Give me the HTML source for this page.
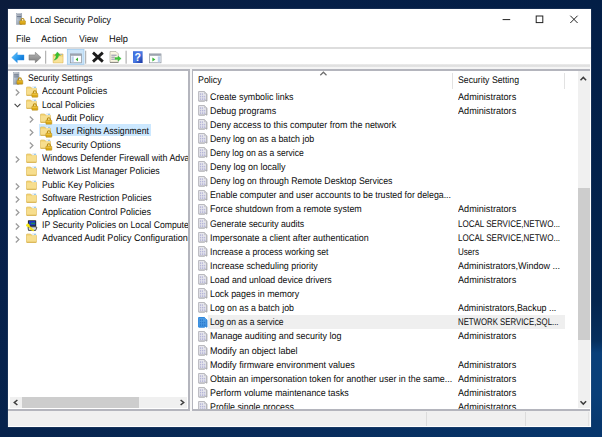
<!DOCTYPE html>
<html><head><meta charset="utf-8"><title>Local Security Policy</title>
<style>
html,body{margin:0;padding:0}
body{width:602px;height:437px;overflow:hidden;position:relative;font-family:"Liberation Sans", sans-serif;font-size:9.7px;color:#0c0c0c;
 background:#06224a;}
.bg{position:absolute;left:0;top:0;width:602px;height:437px;
 background:linear-gradient(90deg,#0b1c3c 0px,#061f47 300px,#031e46 602px);}
.bgl{position:absolute;left:0;top:0;width:9px;height:437px;background:linear-gradient(180deg,#0b1c3c 0px,#08204a 200px,#06234d 437px)}
.bgr{position:absolute;left:585px;top:0;width:17px;height:437px;background:linear-gradient(180deg,#031e46 0px,#04254f 300px,#062f5e 341px,#0a407a 353px,#0a3f78 395px,#07366c 437px)}
.bgb{position:absolute;left:0;top:420px;width:602px;height:17px;background:linear-gradient(90deg,#07234c 0px,#082c5b 300px,#07356a 560px,#07366c 602px)}
.a{position:absolute;display:block}
.t{position:absolute;white-space:pre;text-rendering:geometricPrecision;line-height:12px;height:12px;transform-origin:0 0;display:block}
.win{position:absolute;left:8.3px;top:9px;width:582.7px;height:418.1px;background:#fff;box-shadow:0 0 0 .4px rgba(90,105,130,.5)}
.pane{position:absolute;background:#fff;overflow:hidden}
</style></head><body>
<div class="bg"></div><div class="bgl"></div><div class="bgr"></div><div class="bgb"></div>
<div class="win"></div>

<!-- title bar -->
<svg class="a" style="left:15.8px;top:13.2px" width="10.6" height="12.2" viewBox="0 0 11 13" preserveAspectRatio="none"><defs><linearGradient id="sv2" x1="0" y1="0" x2="1" y2="1"><stop offset="0" stop-color="#e6ebf1"/><stop offset=".5" stop-color="#aab6c4"/><stop offset="1" stop-color="#6f7d8f"/></linearGradient>
<linearGradient id="lk2" x1="0" y1="0" x2="0" y2="1"><stop offset="0" stop-color="#ecbe2c"/><stop offset="1" stop-color="#cc960c"/></linearGradient></defs>
<rect x=".4" y=".4" width="5.6" height="11.8" fill="url(#sv2)" stroke="#8d99a8" stroke-width=".5"/>
<rect x=".9" y=".9" width="4.6" height=".7" fill="#fff"/><rect x=".9" y="1.7" width="4.6" height="1" fill="#3c4a62"/><rect x=".9" y="2.8" width="4.6" height=".6" fill="#fff"/>
<rect x=".9" y="3.5" width="4.6" height=".9" fill="#4d5b72"/>
<rect x="1.1" y="5.0" width="4.2" height=".7" fill="#8d98a8"/>
<path d="M5.4 8.6 V7.3 a1.45 1.45 0 0 1 2.9 0 V8.6" fill="none" stroke="#b88c10" stroke-width="1.1"/>
<rect x="3.9" y="8.3" width="5.9" height="3.9" rx=".4" fill="url(#lk2)" stroke="#a87d0c" stroke-width=".45"/></svg>
<svg class="a" style="left:500px;top:12px" width="82" height="14" viewBox="0 0 82 14">
 <path d="M2.6 7.6 H10.2" stroke="#222" stroke-width="1" fill="none"/>
 <rect x="36.2" y="4" width="6.6" height="6.6" fill="none" stroke="#222" stroke-width="1"/>
 <path d="M70.3 3.7 L77.6 11 M77.6 3.7 L70.3 11" stroke="#222" stroke-width="1" fill="none"/>
</svg>
<span class="t" style="left:30.0px;top:14.55px;transform:scaleX(0.9061)">Local Security Policy</span>
<span class="t" style="left:16.0px;top:33.55px;transform:scaleX(0.9280)">File</span>
<span class="t" style="left:41.0px;top:33.55px;transform:scaleX(0.9652)">Action</span>
<span class="t" style="left:79.0px;top:33.55px;transform:scaleX(0.9122)">View</span>
<span class="t" style="left:109.0px;top:33.55px;transform:scaleX(0.9530)">Help</span>

<!-- menu / toolbar lines -->
<div class="a" style="left:8px;top:47.1px;width:583px;height:1.7px;background:#dddddd"></div>
<div class="a" style="left:8px;top:64px;width:583px;height:2.5px;background:linear-gradient(#ededed,#dedede 60%,#e6e6e6)"></div>
<div class="a" style="left:8px;top:66.5px;width:583px;height:3px;background:#f5f5f5"></div>

<svg class="a" style="left:8px;top:48px" width="160" height="17" viewBox="0 0 160 17">
<defs>
<linearGradient id="ba" x1="0" y1="0" x2="1" y2=".6"><stop offset="0" stop-color="#6fcafb"/><stop offset=".55" stop-color="#2b9bee"/><stop offset="1" stop-color="#0b74d6"/></linearGradient>
<linearGradient id="fa" x1="0" y1="0" x2="0" y2="1"><stop offset="0" stop-color="#b5b5b5"/><stop offset="1" stop-color="#7d7d7d"/></linearGradient>
<linearGradient id="hp" x1="0" y1="0" x2="1" y2="1"><stop offset="0" stop-color="#3d6ddc"/><stop offset=".5" stop-color="#4a7ae4"/><stop offset="1" stop-color="#15339e"/></linearGradient>
</defs>
<!-- back -->
<path d="M3.7 9.5 L9.3 4.3 V6.9 H16 V12.1 H9.3 V14.7 Z" fill="url(#ba)" stroke="#3b97e6" stroke-width=".4"/>
<!-- forward -->
<path d="M33 9.5 L27.3 4.3 V6.9 H21 V12.1 H27.3 V14.7 Z" fill="url(#fa)" stroke="#6e6e6e" stroke-width=".5"/>
<!-- sep -->
<rect x="37.2" y="2.7" width="1" height="13" fill="#a4a4a4"/>
<!-- up folder -->
<path d="M45.2 6.4 H48.6 L49.5 6 H55 V14.8 H45.2 Z" fill="#f3d678" stroke="#d6ab45" stroke-width=".6"/>
<path d="M45.6 8.6 H54.6 V14.4 H45.6 Z" fill="#f8e39b"/>
<rect x="52.2" y="6" width="2" height=".8" fill="#8ab4e0"/>
<path d="M49.4 3.9 L52.4 7.5 L50.7 7.2 C50.5 9.7 48.9 11.6 46 12.2 C47.5 10.7 48.2 9.1 48.2 7.3 L46.6 7.7 Z" fill="#35c230" stroke="#27a027" stroke-width=".3"/>
<!-- show/hide tree (active) -->
<rect x="59.3" y="1.3" width="16.7" height="15" fill="#cce4f7" stroke="#98c8ee" stroke-width=".7"/>
<rect x="62.6" y="5.9" width="11" height="8.9" fill="#fdfdfe" stroke="#858d98" stroke-width=".7"/>
<rect x="62.9" y="6.2" width="10.4" height="1.5" fill="#8c95a2"/>
<rect x="63.5" y="8.4" width="2.3" height="5.8" fill="#bcd2ee"/>
<path d="M70 9.6 V13.2 L67.6 11.4 Z" fill="#34b233"/>
<!-- sep -->
<rect x="77.2" y="2.7" width="1" height="13" fill="#a4a4a4"/>
<!-- delete X -->
<path d="M85 4.6 L94.8 13.6 M94.8 4.6 L85 13.6" stroke="#1c1c1c" stroke-width="2.8" fill="none"/>
<!-- export -->
<path d="M102 3.5 H108 L110.3 5.8 V14.4 H102 Z" fill="#faf6e2" stroke="#a3a194" stroke-width=".6"/>
<path d="M102 14.4 H110.3" stroke="#6b6b66" stroke-width=".7"/>
<path d="M103.3 7.2 H108.6 M103.3 9.2 H106.8 M103.3 11.2 H106.8" stroke="#74759a" stroke-width=".8"/>
<path d="M107 9.6 H110 V8 L113.2 10.6 L110 13.2 V11.6 H107 Z" fill="#3ec83c" stroke="#2aa82e" stroke-width=".3"/>
<!-- sep -->
<rect x="117.6" y="2.7" width="1" height="13" fill="#a4a4a4"/>
<!-- help -->
<rect x="125" y="3.2" width="9.6" height="11.8" fill="url(#hp)"/>
<text x="129.8" y="12.9" font-family="Liberation Sans, sans-serif" font-weight="bold" font-size="10.5" fill="#fff" text-anchor="middle">?</text>
<!-- last -->
<rect x="141.6" y="5.9" width="11.4" height="8.9" fill="#fdfdfe" stroke="#858d98" stroke-width=".7"/>
<rect x="141.9" y="6.2" width="10.8" height="1.5" fill="#8c95a2"/>
<rect x="149.8" y="8.4" width="2.4" height="5.8" fill="#bcd2ee"/>
<path d="M144.4 9.4 V13.4 L147.4 11.4 Z" fill="#36b834"/>
</svg>

<!-- panes -->
<div class="a" style="left:8.3px;top:69.3px;width:581.4px;height:341.4px;background:#f6f6f6"></div>
<!-- tree pane -->
<div class="pane" style="left:8.3px;top:69.4px;width:181.4px;height:341.2px;background:#b4b5bd">
 <div class="a" style="left:0;top:1.4px;width:180.1px;height:338.5px;background:#fff"></div>
 <div class="a" style="left:30.7px;top:54.7px;width:112.3px;height:12.2px;background:#cce8ff"></div>
</div>
<div class="a" style="left:0;top:0;width:188.4px;height:409px;overflow:hidden">
<svg class="a" style="left:13.0px;top:71.7px" width="11" height="13" viewBox="0 0 11 13" preserveAspectRatio="none"><defs><linearGradient id="sv" x1="0" y1="0" x2="1" y2="1"><stop offset="0" stop-color="#e6ebf1"/><stop offset=".5" stop-color="#aab6c4"/><stop offset="1" stop-color="#6f7d8f"/></linearGradient>
<linearGradient id="lk" x1="0" y1="0" x2="0" y2="1"><stop offset="0" stop-color="#ecbe2c"/><stop offset="1" stop-color="#cc960c"/></linearGradient></defs>
<rect x=".4" y=".4" width="5.6" height="11.8" fill="url(#sv)" stroke="#8d99a8" stroke-width=".5"/>
<rect x=".9" y=".9" width="4.6" height=".7" fill="#fff"/><rect x=".9" y="1.7" width="4.6" height="1" fill="#3c4a62"/><rect x=".9" y="2.8" width="4.6" height=".6" fill="#fff"/>
<rect x=".9" y="3.5" width="4.6" height=".9" fill="#4d5b72"/>
<rect x="1.1" y="5.0" width="4.2" height=".7" fill="#8d98a8"/>
<path d="M5.4 8.6 V7.3 a1.45 1.45 0 0 1 2.9 0 V8.6" fill="none" stroke="#b88c10" stroke-width="1.1"/>
<rect x="3.9" y="8.3" width="5.9" height="3.9" rx=".4" fill="url(#lk)" stroke="#a87d0c" stroke-width=".45"/></svg>
<svg class="a" style="left:26.0px;top:85.9px" width="13" height="12" viewBox="0 0 13 12" preserveAspectRatio="none"><path d="M.5 1.6 Q.5 1 1.1 1 H4.6 L5.6 2.1 H9.9 Q10.4 2.1 10.4 2.7 V9 Q10.4 9.5 9.9 9.5 H1 Q.5 9.5 .5 9 Z" fill="#f4d67a" stroke="#d9b24c" stroke-width=".6"/>
<path d="M5.8 1.9 L6.6 .6 H10 V2.4 H6.2 Z" fill="#eef4fa" stroke="#c9d3dd" stroke-width=".3"/>
<rect x="8.2" y=".9" width="1.5" height=".9" fill="#69b4e8"/>
<path d="M.8 3.0 H5.6 L6.5 2.3 H10.1 V9 H.8 Z" fill="#f7de8e"/>
<path d="M.8 9.2 H10.2" stroke="#d3a93f" stroke-width=".7"/><path d="M7.4 7.6 V6.2 a1.45 1.45 0 0 1 2.9 0 V7.6" fill="none" stroke="#b88c10" stroke-width="1.1"/>
<rect x="5.9" y="7.3" width="5.9" height="3.9" rx=".4" fill="#dcaa1a" stroke="#a87d0c" stroke-width=".45"/>
<rect x="6.2" y="7.6" width="5.3" height="1.3" fill="#f2cb45" opacity=".8"/></svg>
<svg class="a" style="left:15.4px;top:88.9px" width="5" height="7" viewBox="0 0 5 7"><path d="M0.8 0.5 L3.9 3.5 L0.8 6.5" fill="none" stroke="#9b9b9b" stroke-width="1.25"/></svg>
<svg class="a" style="left:26.0px;top:99.2px" width="13" height="12" viewBox="0 0 13 12" preserveAspectRatio="none"><path d="M.5 1.6 Q.5 1 1.1 1 H4.6 L5.6 2.1 H9.9 Q10.4 2.1 10.4 2.7 V9 Q10.4 9.5 9.9 9.5 H1 Q.5 9.5 .5 9 Z" fill="#f4d67a" stroke="#d9b24c" stroke-width=".6"/>
<path d="M5.8 1.9 L6.6 .6 H10 V2.4 H6.2 Z" fill="#eef4fa" stroke="#c9d3dd" stroke-width=".3"/>
<rect x="8.2" y=".9" width="1.5" height=".9" fill="#69b4e8"/>
<path d="M.8 3.0 H5.6 L6.5 2.3 H10.1 V9 H.8 Z" fill="#f7de8e"/>
<path d="M.8 9.2 H10.2" stroke="#d3a93f" stroke-width=".7"/><path d="M7.4 7.6 V6.2 a1.45 1.45 0 0 1 2.9 0 V7.6" fill="none" stroke="#b88c10" stroke-width="1.1"/>
<rect x="5.9" y="7.3" width="5.9" height="3.9" rx=".4" fill="#dcaa1a" stroke="#a87d0c" stroke-width=".45"/>
<rect x="6.2" y="7.6" width="5.3" height="1.3" fill="#f2cb45" opacity=".8"/></svg>
<svg class="a" style="left:14.0px;top:102.5px" width="7" height="5" viewBox="0 0 7 5"><path d="M0.6 0.8 L3.5 3.8 L6.4 0.8" fill="none" stroke="#404040" stroke-width="1.1"/></svg>
<svg class="a" style="left:39.7px;top:112.6px" width="13" height="12" viewBox="0 0 13 12" preserveAspectRatio="none"><path d="M.5 1.6 Q.5 1 1.1 1 H4.6 L5.6 2.1 H9.9 Q10.4 2.1 10.4 2.7 V9 Q10.4 9.5 9.9 9.5 H1 Q.5 9.5 .5 9 Z" fill="#f4d67a" stroke="#d9b24c" stroke-width=".6"/>
<path d="M5.8 1.9 L6.6 .6 H10 V2.4 H6.2 Z" fill="#eef4fa" stroke="#c9d3dd" stroke-width=".3"/>
<rect x="8.2" y=".9" width="1.5" height=".9" fill="#69b4e8"/>
<path d="M.8 3.0 H5.6 L6.5 2.3 H10.1 V9 H.8 Z" fill="#f7de8e"/>
<path d="M.8 9.2 H10.2" stroke="#d3a93f" stroke-width=".7"/><path d="M7.4 7.6 V6.2 a1.45 1.45 0 0 1 2.9 0 V7.6" fill="none" stroke="#b88c10" stroke-width="1.1"/>
<rect x="5.9" y="7.3" width="5.9" height="3.9" rx=".4" fill="#dcaa1a" stroke="#a87d0c" stroke-width=".45"/>
<rect x="6.2" y="7.6" width="5.3" height="1.3" fill="#f2cb45" opacity=".8"/></svg>
<svg class="a" style="left:29.1px;top:115.6px" width="5" height="7" viewBox="0 0 5 7"><path d="M0.8 0.5 L3.9 3.5 L0.8 6.5" fill="none" stroke="#9b9b9b" stroke-width="1.25"/></svg>
<svg class="a" style="left:39.7px;top:126.0px" width="13" height="12" viewBox="0 0 13 12" preserveAspectRatio="none"><path d="M.5 1.6 Q.5 1 1.1 1 H4.6 L5.6 2.1 H9.9 Q10.4 2.1 10.4 2.7 V9 Q10.4 9.5 9.9 9.5 H1 Q.5 9.5 .5 9 Z" fill="#f4d67a" stroke="#d9b24c" stroke-width=".6"/>
<path d="M5.8 1.9 L6.6 .6 H10 V2.4 H6.2 Z" fill="#eef4fa" stroke="#c9d3dd" stroke-width=".3"/>
<rect x="8.2" y=".9" width="1.5" height=".9" fill="#69b4e8"/>
<path d="M.8 3.0 H5.6 L6.5 2.3 H10.1 V9 H.8 Z" fill="#f7de8e"/>
<path d="M.8 9.2 H10.2" stroke="#d3a93f" stroke-width=".7"/><path d="M7.4 7.6 V6.2 a1.45 1.45 0 0 1 2.9 0 V7.6" fill="none" stroke="#b88c10" stroke-width="1.1"/>
<rect x="5.9" y="7.3" width="5.9" height="3.9" rx=".4" fill="#dcaa1a" stroke="#a87d0c" stroke-width=".45"/>
<rect x="6.2" y="7.6" width="5.3" height="1.3" fill="#f2cb45" opacity=".8"/></svg>
<svg class="a" style="left:29.1px;top:129.0px" width="5" height="7" viewBox="0 0 5 7"><path d="M0.8 0.5 L3.9 3.5 L0.8 6.5" fill="none" stroke="#9b9b9b" stroke-width="1.25"/></svg>
<svg class="a" style="left:39.7px;top:139.3px" width="13" height="12" viewBox="0 0 13 12" preserveAspectRatio="none"><path d="M.5 1.6 Q.5 1 1.1 1 H4.6 L5.6 2.1 H9.9 Q10.4 2.1 10.4 2.7 V9 Q10.4 9.5 9.9 9.5 H1 Q.5 9.5 .5 9 Z" fill="#f4d67a" stroke="#d9b24c" stroke-width=".6"/>
<path d="M5.8 1.9 L6.6 .6 H10 V2.4 H6.2 Z" fill="#eef4fa" stroke="#c9d3dd" stroke-width=".3"/>
<rect x="8.2" y=".9" width="1.5" height=".9" fill="#69b4e8"/>
<path d="M.8 3.0 H5.6 L6.5 2.3 H10.1 V9 H.8 Z" fill="#f7de8e"/>
<path d="M.8 9.2 H10.2" stroke="#d3a93f" stroke-width=".7"/><path d="M7.4 7.6 V6.2 a1.45 1.45 0 0 1 2.9 0 V7.6" fill="none" stroke="#b88c10" stroke-width="1.1"/>
<rect x="5.9" y="7.3" width="5.9" height="3.9" rx=".4" fill="#dcaa1a" stroke="#a87d0c" stroke-width=".45"/>
<rect x="6.2" y="7.6" width="5.3" height="1.3" fill="#f2cb45" opacity=".8"/></svg>
<svg class="a" style="left:29.1px;top:142.3px" width="5" height="7" viewBox="0 0 5 7"><path d="M0.8 0.5 L3.9 3.5 L0.8 6.5" fill="none" stroke="#9b9b9b" stroke-width="1.25"/></svg>
<svg class="a" style="left:26.0px;top:152.7px" width="12" height="12" viewBox="0 0 12 12" preserveAspectRatio="none"><path d="M.5 1.6 Q.5 1 1.1 1 H4.6 L5.6 2.1 H9.9 Q10.4 2.1 10.4 2.7 V9 Q10.4 9.5 9.9 9.5 H1 Q.5 9.5 .5 9 Z" fill="#f4d67a" stroke="#d9b24c" stroke-width=".6"/>
<path d="M5.8 1.9 L6.6 .6 H10 V2.4 H6.2 Z" fill="#eef4fa" stroke="#c9d3dd" stroke-width=".3"/>
<rect x="8.2" y=".9" width="1.5" height=".9" fill="#69b4e8"/>
<path d="M.8 3.0 H5.6 L6.5 2.3 H10.1 V9 H.8 Z" fill="#f7de8e"/>
<path d="M.8 9.2 H10.2" stroke="#d3a93f" stroke-width=".7"/></svg>
<svg class="a" style="left:15.4px;top:155.7px" width="5" height="7" viewBox="0 0 5 7"><path d="M0.8 0.5 L3.9 3.5 L0.8 6.5" fill="none" stroke="#9b9b9b" stroke-width="1.25"/></svg>
<svg class="a" style="left:26.0px;top:166.1px" width="12" height="12" viewBox="0 0 12 12" preserveAspectRatio="none"><path d="M.5 1.6 Q.5 1 1.1 1 H4.6 L5.6 2.1 H9.9 Q10.4 2.1 10.4 2.7 V9 Q10.4 9.5 9.9 9.5 H1 Q.5 9.5 .5 9 Z" fill="#f4d67a" stroke="#d9b24c" stroke-width=".6"/>
<path d="M5.8 1.9 L6.6 .6 H10 V2.4 H6.2 Z" fill="#eef4fa" stroke="#c9d3dd" stroke-width=".3"/>
<rect x="8.2" y=".9" width="1.5" height=".9" fill="#69b4e8"/>
<path d="M.8 3.0 H5.6 L6.5 2.3 H10.1 V9 H.8 Z" fill="#f7de8e"/>
<path d="M.8 9.2 H10.2" stroke="#d3a93f" stroke-width=".7"/></svg>
<svg class="a" style="left:26.0px;top:179.5px" width="12" height="12" viewBox="0 0 12 12" preserveAspectRatio="none"><path d="M.5 1.6 Q.5 1 1.1 1 H4.6 L5.6 2.1 H9.9 Q10.4 2.1 10.4 2.7 V9 Q10.4 9.5 9.9 9.5 H1 Q.5 9.5 .5 9 Z" fill="#f4d67a" stroke="#d9b24c" stroke-width=".6"/>
<path d="M5.8 1.9 L6.6 .6 H10 V2.4 H6.2 Z" fill="#eef4fa" stroke="#c9d3dd" stroke-width=".3"/>
<rect x="8.2" y=".9" width="1.5" height=".9" fill="#69b4e8"/>
<path d="M.8 3.0 H5.6 L6.5 2.3 H10.1 V9 H.8 Z" fill="#f7de8e"/>
<path d="M.8 9.2 H10.2" stroke="#d3a93f" stroke-width=".7"/></svg>
<svg class="a" style="left:15.4px;top:182.5px" width="5" height="7" viewBox="0 0 5 7"><path d="M0.8 0.5 L3.9 3.5 L0.8 6.5" fill="none" stroke="#9b9b9b" stroke-width="1.25"/></svg>
<svg class="a" style="left:26.0px;top:192.8px" width="12" height="12" viewBox="0 0 12 12" preserveAspectRatio="none"><path d="M.5 1.6 Q.5 1 1.1 1 H4.6 L5.6 2.1 H9.9 Q10.4 2.1 10.4 2.7 V9 Q10.4 9.5 9.9 9.5 H1 Q.5 9.5 .5 9 Z" fill="#f4d67a" stroke="#d9b24c" stroke-width=".6"/>
<path d="M5.8 1.9 L6.6 .6 H10 V2.4 H6.2 Z" fill="#eef4fa" stroke="#c9d3dd" stroke-width=".3"/>
<rect x="8.2" y=".9" width="1.5" height=".9" fill="#69b4e8"/>
<path d="M.8 3.0 H5.6 L6.5 2.3 H10.1 V9 H.8 Z" fill="#f7de8e"/>
<path d="M.8 9.2 H10.2" stroke="#d3a93f" stroke-width=".7"/></svg>
<svg class="a" style="left:15.4px;top:195.8px" width="5" height="7" viewBox="0 0 5 7"><path d="M0.8 0.5 L3.9 3.5 L0.8 6.5" fill="none" stroke="#9b9b9b" stroke-width="1.25"/></svg>
<svg class="a" style="left:26.0px;top:206.2px" width="12" height="12" viewBox="0 0 12 12" preserveAspectRatio="none"><path d="M.5 1.6 Q.5 1 1.1 1 H4.6 L5.6 2.1 H9.9 Q10.4 2.1 10.4 2.7 V9 Q10.4 9.5 9.9 9.5 H1 Q.5 9.5 .5 9 Z" fill="#f4d67a" stroke="#d9b24c" stroke-width=".6"/>
<path d="M5.8 1.9 L6.6 .6 H10 V2.4 H6.2 Z" fill="#eef4fa" stroke="#c9d3dd" stroke-width=".3"/>
<rect x="8.2" y=".9" width="1.5" height=".9" fill="#69b4e8"/>
<path d="M.8 3.0 H5.6 L6.5 2.3 H10.1 V9 H.8 Z" fill="#f7de8e"/>
<path d="M.8 9.2 H10.2" stroke="#d3a93f" stroke-width=".7"/></svg>
<svg class="a" style="left:15.4px;top:209.2px" width="5" height="7" viewBox="0 0 5 7"><path d="M0.8 0.5 L3.9 3.5 L0.8 6.5" fill="none" stroke="#9b9b9b" stroke-width="1.25"/></svg>
<svg class="a" style="left:26.0px;top:219.6px" width="12" height="12" viewBox="0 0 12 12" preserveAspectRatio="none"><rect x="1.9" y=".2" width="8.3" height="6.5" rx=".6" fill="#23262c"/>
<rect x="2.9" y="1.1" width="6.3" height="4.3" fill="#1b36cc"/>
<rect x="4.9" y="2.7" width="4.2" height="1.5" fill="#1f8a5a"/>
<path d="M2 7.2 L3.3 6.8 H9.1 L10.9 7.2 L9.7 10.4 H2.5 Z" fill="#d5d9de" stroke="#26282c" stroke-width=".8"/>
<path d="M1.6 5.2 L7.2 10.4" stroke="#f2e20e" stroke-width="1.6" stroke-linecap="round"/>
<path d="M5.6 10.6 L6.9 9.2 M4.6 9.6 L5.6 8.5" stroke="#f2e20e" stroke-width=".8"/>
<circle cx="1.9" cy="5.2" r="1.7" fill="#f5e614"/></svg>
<svg class="a" style="left:15.4px;top:222.6px" width="5" height="7" viewBox="0 0 5 7"><path d="M0.8 0.5 L3.9 3.5 L0.8 6.5" fill="none" stroke="#9b9b9b" stroke-width="1.25"/></svg>
<svg class="a" style="left:26.0px;top:232.9px" width="12" height="12" viewBox="0 0 12 12" preserveAspectRatio="none"><path d="M.5 1.6 Q.5 1 1.1 1 H4.6 L5.6 2.1 H9.9 Q10.4 2.1 10.4 2.7 V9 Q10.4 9.5 9.9 9.5 H1 Q.5 9.5 .5 9 Z" fill="#f4d67a" stroke="#d9b24c" stroke-width=".6"/>
<path d="M5.8 1.9 L6.6 .6 H10 V2.4 H6.2 Z" fill="#eef4fa" stroke="#c9d3dd" stroke-width=".3"/>
<rect x="8.2" y=".9" width="1.5" height=".9" fill="#69b4e8"/>
<path d="M.8 3.0 H5.6 L6.5 2.3 H10.1 V9 H.8 Z" fill="#f7de8e"/>
<path d="M.8 9.2 H10.2" stroke="#d3a93f" stroke-width=".7"/></svg>
<svg class="a" style="left:15.4px;top:235.9px" width="5" height="7" viewBox="0 0 5 7"><path d="M0.8 0.5 L3.9 3.5 L0.8 6.5" fill="none" stroke="#9b9b9b" stroke-width="1.25"/></svg>
<span class="t" style="left:27.5px;top:72.55px;transform:scaleX(0.8885)">Security Settings</span>
<span class="t" style="left:42.0px;top:85.55px;transform:scaleX(0.9159)">Account Policies</span>
<span class="t" style="left:42.0px;top:99.55px;transform:scaleX(0.8863)">Local Policies</span>
<span class="t" style="left:55.8px;top:112.55px;transform:scaleX(0.9422)">Audit Policy</span>
<span class="t" style="left:55.8px;top:125.55px;transform:scaleX(0.8987)">User Rights Assignment</span>
<span class="t" style="left:55.8px;top:139.55px;transform:scaleX(0.9103)">Security Options</span>
<span class="t" style="left:42.0px;top:152.55px;transform:scaleX(0.9103)">Windows Defender Firewall with Advanced Security</span>
<span class="t" style="left:42.0px;top:165.55px;transform:scaleX(0.9033)">Network List Manager Policies</span>
<span class="t" style="left:42.0px;top:179.55px;transform:scaleX(0.8834)">Public Key Policies</span>
<span class="t" style="left:42.0px;top:192.55px;transform:scaleX(0.8928)">Software Restriction Policies</span>
<span class="t" style="left:42.0px;top:206.55px;transform:scaleX(0.9285)">Application Control Policies</span>
<span class="t" style="left:42.0px;top:219.55px;transform:scaleX(0.8949)">IP Security Policies on Local Computer</span>
<span class="t" style="left:42.0px;top:232.55px;transform:scaleX(0.9335)">Advanced Audit Policy Configuration</span>
</div>
<!-- tree hscroll -->
<div class="a" style="left:10.3px;top:397px;width:176.7px;height:10.9px;background:#f0f0f0"></div>
<div class="a" style="left:22.2px;top:397px;width:116.8px;height:10.9px;background:#cdcdcd"></div>
<svg class="a" style="left:10px;top:397px" width="178" height="11" viewBox="0 0 178 11">
 <path d="M7.4 3 L4.3 5.5 L7.4 8" fill="none" stroke="#3c3c3c" stroke-width="1.5"/>
 <path d="M170.6 3 L173.7 5.5 L170.6 8" fill="none" stroke="#3c3c3c" stroke-width="1.5"/>
</svg>

<!-- list pane -->
<div class="pane" style="left:191.7px;top:69.4px;width:398px;height:341.2px;background:#b4b5bd">
 <div class="a" style="left:1.3px;top:1.4px;width:396.7px;height:338.5px;background:#fff"></div>
 <div class="a" style="left:16.6px;top:245.6px;width:356.3px;height:14.3px;background:#efefef"></div>
</div>
<div class="a" style="left:452.2px;top:72.5px;width:1px;height:16px;background:#e2e2e2"></div>
<div class="a" style="left:564.2px;top:72.5px;width:1px;height:16px;background:#e2e2e2"></div>
<svg class="a" style="left:319.3px;top:70.6px" width="9" height="5" viewBox="0 0 9 5"><path d="M1.3 4.2 L4.4 1.2 L7.5 4.2" fill="none" stroke="#6e6e6e" stroke-width="1.2"/></svg>
<div class="a" style="left:0;top:71px;width:577.5px;height:338.2px;overflow:hidden"><div class="a" style="left:0;top:-71px">
<svg class="a" style="left:197.9px;top:91.0px" width="10" height="11" viewBox="0 0 10 11" preserveAspectRatio="none"><path d="M.6 .5 H6.5 L8.8 2.8 V10.1 L7.6 9.3 L6.3 10.1 H.6 Z" fill="#e6e6ec" stroke="#b9b9be" stroke-width="1"/>
<path d="M6.5 .5 V2.8 H8.8" fill="#d2d2d8" stroke="#b9b9be" stroke-width=".6"/>
<path d="M8.8 3.2 V10.1 L7.6 9.3 L6.3 10.1 H1.2" fill="none" stroke="#9a9aa0" stroke-width=".7" opacity=".75"/>
<g fill="#b4b4d8"><rect x="1.9" y="2.3" width="1.1" height="1.6"/><rect x="3.8" y="2.3" width="1.1" height="1.6"/>
<rect x="1.9" y="4.8" width="1.3" height="1.6"/><rect x="4" y="4.8" width="1.3" height="1.6"/><rect x="6.1" y="4.8" width="1.1" height="1.6"/>
<rect x="1.9" y="7.3" width="1.3" height="1.6"/><rect x="4" y="7.3" width="1.3" height="1.6"/><rect x="6.1" y="7.3" width="1.1" height="1.6"/></g></svg>
<svg class="a" style="left:197.9px;top:105.0px" width="10" height="11" viewBox="0 0 10 11" preserveAspectRatio="none"><path d="M.6 .5 H6.5 L8.8 2.8 V10.1 L7.6 9.3 L6.3 10.1 H.6 Z" fill="#e6e6ec" stroke="#b9b9be" stroke-width="1"/>
<path d="M6.5 .5 V2.8 H8.8" fill="#d2d2d8" stroke="#b9b9be" stroke-width=".6"/>
<path d="M8.8 3.2 V10.1 L7.6 9.3 L6.3 10.1 H1.2" fill="none" stroke="#9a9aa0" stroke-width=".7" opacity=".75"/>
<g fill="#b4b4d8"><rect x="1.9" y="2.3" width="1.1" height="1.6"/><rect x="3.8" y="2.3" width="1.1" height="1.6"/>
<rect x="1.9" y="4.8" width="1.3" height="1.6"/><rect x="4" y="4.8" width="1.3" height="1.6"/><rect x="6.1" y="4.8" width="1.1" height="1.6"/>
<rect x="1.9" y="7.3" width="1.3" height="1.6"/><rect x="4" y="7.3" width="1.3" height="1.6"/><rect x="6.1" y="7.3" width="1.1" height="1.6"/></g></svg>
<svg class="a" style="left:197.9px;top:119.2px" width="10" height="11" viewBox="0 0 10 11" preserveAspectRatio="none"><path d="M.6 .5 H6.5 L8.8 2.8 V10.1 L7.6 9.3 L6.3 10.1 H.6 Z" fill="#e6e6ec" stroke="#b9b9be" stroke-width="1"/>
<path d="M6.5 .5 V2.8 H8.8" fill="#d2d2d8" stroke="#b9b9be" stroke-width=".6"/>
<path d="M8.8 3.2 V10.1 L7.6 9.3 L6.3 10.1 H1.2" fill="none" stroke="#9a9aa0" stroke-width=".7" opacity=".75"/>
<g fill="#b4b4d8"><rect x="1.9" y="2.3" width="1.1" height="1.6"/><rect x="3.8" y="2.3" width="1.1" height="1.6"/>
<rect x="1.9" y="4.8" width="1.3" height="1.6"/><rect x="4" y="4.8" width="1.3" height="1.6"/><rect x="6.1" y="4.8" width="1.1" height="1.6"/>
<rect x="1.9" y="7.3" width="1.3" height="1.6"/><rect x="4" y="7.3" width="1.3" height="1.6"/><rect x="6.1" y="7.3" width="1.1" height="1.6"/></g></svg>
<svg class="a" style="left:197.9px;top:133.2px" width="10" height="11" viewBox="0 0 10 11" preserveAspectRatio="none"><path d="M.6 .5 H6.5 L8.8 2.8 V10.1 L7.6 9.3 L6.3 10.1 H.6 Z" fill="#e6e6ec" stroke="#b9b9be" stroke-width="1"/>
<path d="M6.5 .5 V2.8 H8.8" fill="#d2d2d8" stroke="#b9b9be" stroke-width=".6"/>
<path d="M8.8 3.2 V10.1 L7.6 9.3 L6.3 10.1 H1.2" fill="none" stroke="#9a9aa0" stroke-width=".7" opacity=".75"/>
<g fill="#b4b4d8"><rect x="1.9" y="2.3" width="1.1" height="1.6"/><rect x="3.8" y="2.3" width="1.1" height="1.6"/>
<rect x="1.9" y="4.8" width="1.3" height="1.6"/><rect x="4" y="4.8" width="1.3" height="1.6"/><rect x="6.1" y="4.8" width="1.1" height="1.6"/>
<rect x="1.9" y="7.3" width="1.3" height="1.6"/><rect x="4" y="7.3" width="1.3" height="1.6"/><rect x="6.1" y="7.3" width="1.1" height="1.6"/></g></svg>
<svg class="a" style="left:197.9px;top:147.3px" width="10" height="11" viewBox="0 0 10 11" preserveAspectRatio="none"><path d="M.6 .5 H6.5 L8.8 2.8 V10.1 L7.6 9.3 L6.3 10.1 H.6 Z" fill="#e6e6ec" stroke="#b9b9be" stroke-width="1"/>
<path d="M6.5 .5 V2.8 H8.8" fill="#d2d2d8" stroke="#b9b9be" stroke-width=".6"/>
<path d="M8.8 3.2 V10.1 L7.6 9.3 L6.3 10.1 H1.2" fill="none" stroke="#9a9aa0" stroke-width=".7" opacity=".75"/>
<g fill="#b4b4d8"><rect x="1.9" y="2.3" width="1.1" height="1.6"/><rect x="3.8" y="2.3" width="1.1" height="1.6"/>
<rect x="1.9" y="4.8" width="1.3" height="1.6"/><rect x="4" y="4.8" width="1.3" height="1.6"/><rect x="6.1" y="4.8" width="1.1" height="1.6"/>
<rect x="1.9" y="7.3" width="1.3" height="1.6"/><rect x="4" y="7.3" width="1.3" height="1.6"/><rect x="6.1" y="7.3" width="1.1" height="1.6"/></g></svg>
<svg class="a" style="left:197.9px;top:161.4px" width="10" height="11" viewBox="0 0 10 11" preserveAspectRatio="none"><path d="M.6 .5 H6.5 L8.8 2.8 V10.1 L7.6 9.3 L6.3 10.1 H.6 Z" fill="#e6e6ec" stroke="#b9b9be" stroke-width="1"/>
<path d="M6.5 .5 V2.8 H8.8" fill="#d2d2d8" stroke="#b9b9be" stroke-width=".6"/>
<path d="M8.8 3.2 V10.1 L7.6 9.3 L6.3 10.1 H1.2" fill="none" stroke="#9a9aa0" stroke-width=".7" opacity=".75"/>
<g fill="#b4b4d8"><rect x="1.9" y="2.3" width="1.1" height="1.6"/><rect x="3.8" y="2.3" width="1.1" height="1.6"/>
<rect x="1.9" y="4.8" width="1.3" height="1.6"/><rect x="4" y="4.8" width="1.3" height="1.6"/><rect x="6.1" y="4.8" width="1.1" height="1.6"/>
<rect x="1.9" y="7.3" width="1.3" height="1.6"/><rect x="4" y="7.3" width="1.3" height="1.6"/><rect x="6.1" y="7.3" width="1.1" height="1.6"/></g></svg>
<svg class="a" style="left:197.9px;top:175.6px" width="10" height="11" viewBox="0 0 10 11" preserveAspectRatio="none"><path d="M.6 .5 H6.5 L8.8 2.8 V10.1 L7.6 9.3 L6.3 10.1 H.6 Z" fill="#e6e6ec" stroke="#b9b9be" stroke-width="1"/>
<path d="M6.5 .5 V2.8 H8.8" fill="#d2d2d8" stroke="#b9b9be" stroke-width=".6"/>
<path d="M8.8 3.2 V10.1 L7.6 9.3 L6.3 10.1 H1.2" fill="none" stroke="#9a9aa0" stroke-width=".7" opacity=".75"/>
<g fill="#b4b4d8"><rect x="1.9" y="2.3" width="1.1" height="1.6"/><rect x="3.8" y="2.3" width="1.1" height="1.6"/>
<rect x="1.9" y="4.8" width="1.3" height="1.6"/><rect x="4" y="4.8" width="1.3" height="1.6"/><rect x="6.1" y="4.8" width="1.1" height="1.6"/>
<rect x="1.9" y="7.3" width="1.3" height="1.6"/><rect x="4" y="7.3" width="1.3" height="1.6"/><rect x="6.1" y="7.3" width="1.1" height="1.6"/></g></svg>
<svg class="a" style="left:197.9px;top:189.7px" width="10" height="11" viewBox="0 0 10 11" preserveAspectRatio="none"><path d="M.6 .5 H6.5 L8.8 2.8 V10.1 L7.6 9.3 L6.3 10.1 H.6 Z" fill="#e6e6ec" stroke="#b9b9be" stroke-width="1"/>
<path d="M6.5 .5 V2.8 H8.8" fill="#d2d2d8" stroke="#b9b9be" stroke-width=".6"/>
<path d="M8.8 3.2 V10.1 L7.6 9.3 L6.3 10.1 H1.2" fill="none" stroke="#9a9aa0" stroke-width=".7" opacity=".75"/>
<g fill="#b4b4d8"><rect x="1.9" y="2.3" width="1.1" height="1.6"/><rect x="3.8" y="2.3" width="1.1" height="1.6"/>
<rect x="1.9" y="4.8" width="1.3" height="1.6"/><rect x="4" y="4.8" width="1.3" height="1.6"/><rect x="6.1" y="4.8" width="1.1" height="1.6"/>
<rect x="1.9" y="7.3" width="1.3" height="1.6"/><rect x="4" y="7.3" width="1.3" height="1.6"/><rect x="6.1" y="7.3" width="1.1" height="1.6"/></g></svg>
<svg class="a" style="left:197.9px;top:203.8px" width="10" height="11" viewBox="0 0 10 11" preserveAspectRatio="none"><path d="M.6 .5 H6.5 L8.8 2.8 V10.1 L7.6 9.3 L6.3 10.1 H.6 Z" fill="#e6e6ec" stroke="#b9b9be" stroke-width="1"/>
<path d="M6.5 .5 V2.8 H8.8" fill="#d2d2d8" stroke="#b9b9be" stroke-width=".6"/>
<path d="M8.8 3.2 V10.1 L7.6 9.3 L6.3 10.1 H1.2" fill="none" stroke="#9a9aa0" stroke-width=".7" opacity=".75"/>
<g fill="#b4b4d8"><rect x="1.9" y="2.3" width="1.1" height="1.6"/><rect x="3.8" y="2.3" width="1.1" height="1.6"/>
<rect x="1.9" y="4.8" width="1.3" height="1.6"/><rect x="4" y="4.8" width="1.3" height="1.6"/><rect x="6.1" y="4.8" width="1.1" height="1.6"/>
<rect x="1.9" y="7.3" width="1.3" height="1.6"/><rect x="4" y="7.3" width="1.3" height="1.6"/><rect x="6.1" y="7.3" width="1.1" height="1.6"/></g></svg>
<svg class="a" style="left:197.9px;top:217.8px" width="10" height="11" viewBox="0 0 10 11" preserveAspectRatio="none"><path d="M.6 .5 H6.5 L8.8 2.8 V10.1 L7.6 9.3 L6.3 10.1 H.6 Z" fill="#e6e6ec" stroke="#b9b9be" stroke-width="1"/>
<path d="M6.5 .5 V2.8 H8.8" fill="#d2d2d8" stroke="#b9b9be" stroke-width=".6"/>
<path d="M8.8 3.2 V10.1 L7.6 9.3 L6.3 10.1 H1.2" fill="none" stroke="#9a9aa0" stroke-width=".7" opacity=".75"/>
<g fill="#b4b4d8"><rect x="1.9" y="2.3" width="1.1" height="1.6"/><rect x="3.8" y="2.3" width="1.1" height="1.6"/>
<rect x="1.9" y="4.8" width="1.3" height="1.6"/><rect x="4" y="4.8" width="1.3" height="1.6"/><rect x="6.1" y="4.8" width="1.1" height="1.6"/>
<rect x="1.9" y="7.3" width="1.3" height="1.6"/><rect x="4" y="7.3" width="1.3" height="1.6"/><rect x="6.1" y="7.3" width="1.1" height="1.6"/></g></svg>
<svg class="a" style="left:197.9px;top:231.9px" width="10" height="11" viewBox="0 0 10 11" preserveAspectRatio="none"><path d="M.6 .5 H6.5 L8.8 2.8 V10.1 L7.6 9.3 L6.3 10.1 H.6 Z" fill="#e6e6ec" stroke="#b9b9be" stroke-width="1"/>
<path d="M6.5 .5 V2.8 H8.8" fill="#d2d2d8" stroke="#b9b9be" stroke-width=".6"/>
<path d="M8.8 3.2 V10.1 L7.6 9.3 L6.3 10.1 H1.2" fill="none" stroke="#9a9aa0" stroke-width=".7" opacity=".75"/>
<g fill="#b4b4d8"><rect x="1.9" y="2.3" width="1.1" height="1.6"/><rect x="3.8" y="2.3" width="1.1" height="1.6"/>
<rect x="1.9" y="4.8" width="1.3" height="1.6"/><rect x="4" y="4.8" width="1.3" height="1.6"/><rect x="6.1" y="4.8" width="1.1" height="1.6"/>
<rect x="1.9" y="7.3" width="1.3" height="1.6"/><rect x="4" y="7.3" width="1.3" height="1.6"/><rect x="6.1" y="7.3" width="1.1" height="1.6"/></g></svg>
<svg class="a" style="left:197.9px;top:246.1px" width="10" height="11" viewBox="0 0 10 11" preserveAspectRatio="none"><path d="M.6 .5 H6.5 L8.8 2.8 V10.1 L7.6 9.3 L6.3 10.1 H.6 Z" fill="#e6e6ec" stroke="#b9b9be" stroke-width="1"/>
<path d="M6.5 .5 V2.8 H8.8" fill="#d2d2d8" stroke="#b9b9be" stroke-width=".6"/>
<path d="M8.8 3.2 V10.1 L7.6 9.3 L6.3 10.1 H1.2" fill="none" stroke="#9a9aa0" stroke-width=".7" opacity=".75"/>
<g fill="#b4b4d8"><rect x="1.9" y="2.3" width="1.1" height="1.6"/><rect x="3.8" y="2.3" width="1.1" height="1.6"/>
<rect x="1.9" y="4.8" width="1.3" height="1.6"/><rect x="4" y="4.8" width="1.3" height="1.6"/><rect x="6.1" y="4.8" width="1.1" height="1.6"/>
<rect x="1.9" y="7.3" width="1.3" height="1.6"/><rect x="4" y="7.3" width="1.3" height="1.6"/><rect x="6.1" y="7.3" width="1.1" height="1.6"/></g></svg>
<svg class="a" style="left:197.9px;top:260.1px" width="10" height="11" viewBox="0 0 10 11" preserveAspectRatio="none"><path d="M.6 .5 H6.5 L8.8 2.8 V10.1 L7.6 9.3 L6.3 10.1 H.6 Z" fill="#e6e6ec" stroke="#b9b9be" stroke-width="1"/>
<path d="M6.5 .5 V2.8 H8.8" fill="#d2d2d8" stroke="#b9b9be" stroke-width=".6"/>
<path d="M8.8 3.2 V10.1 L7.6 9.3 L6.3 10.1 H1.2" fill="none" stroke="#9a9aa0" stroke-width=".7" opacity=".75"/>
<g fill="#b4b4d8"><rect x="1.9" y="2.3" width="1.1" height="1.6"/><rect x="3.8" y="2.3" width="1.1" height="1.6"/>
<rect x="1.9" y="4.8" width="1.3" height="1.6"/><rect x="4" y="4.8" width="1.3" height="1.6"/><rect x="6.1" y="4.8" width="1.1" height="1.6"/>
<rect x="1.9" y="7.3" width="1.3" height="1.6"/><rect x="4" y="7.3" width="1.3" height="1.6"/><rect x="6.1" y="7.3" width="1.1" height="1.6"/></g></svg>
<svg class="a" style="left:197.9px;top:274.2px" width="10" height="11" viewBox="0 0 10 11" preserveAspectRatio="none"><path d="M.6 .5 H6.5 L8.8 2.8 V10.1 L7.6 9.3 L6.3 10.1 H.6 Z" fill="#e6e6ec" stroke="#b9b9be" stroke-width="1"/>
<path d="M6.5 .5 V2.8 H8.8" fill="#d2d2d8" stroke="#b9b9be" stroke-width=".6"/>
<path d="M8.8 3.2 V10.1 L7.6 9.3 L6.3 10.1 H1.2" fill="none" stroke="#9a9aa0" stroke-width=".7" opacity=".75"/>
<g fill="#b4b4d8"><rect x="1.9" y="2.3" width="1.1" height="1.6"/><rect x="3.8" y="2.3" width="1.1" height="1.6"/>
<rect x="1.9" y="4.8" width="1.3" height="1.6"/><rect x="4" y="4.8" width="1.3" height="1.6"/><rect x="6.1" y="4.8" width="1.1" height="1.6"/>
<rect x="1.9" y="7.3" width="1.3" height="1.6"/><rect x="4" y="7.3" width="1.3" height="1.6"/><rect x="6.1" y="7.3" width="1.1" height="1.6"/></g></svg>
<svg class="a" style="left:197.9px;top:288.4px" width="10" height="11" viewBox="0 0 10 11" preserveAspectRatio="none"><path d="M.6 .5 H6.5 L8.8 2.8 V10.1 L7.6 9.3 L6.3 10.1 H.6 Z" fill="#e6e6ec" stroke="#b9b9be" stroke-width="1"/>
<path d="M6.5 .5 V2.8 H8.8" fill="#d2d2d8" stroke="#b9b9be" stroke-width=".6"/>
<path d="M8.8 3.2 V10.1 L7.6 9.3 L6.3 10.1 H1.2" fill="none" stroke="#9a9aa0" stroke-width=".7" opacity=".75"/>
<g fill="#b4b4d8"><rect x="1.9" y="2.3" width="1.1" height="1.6"/><rect x="3.8" y="2.3" width="1.1" height="1.6"/>
<rect x="1.9" y="4.8" width="1.3" height="1.6"/><rect x="4" y="4.8" width="1.3" height="1.6"/><rect x="6.1" y="4.8" width="1.1" height="1.6"/>
<rect x="1.9" y="7.3" width="1.3" height="1.6"/><rect x="4" y="7.3" width="1.3" height="1.6"/><rect x="6.1" y="7.3" width="1.1" height="1.6"/></g></svg>
<svg class="a" style="left:197.9px;top:302.4px" width="10" height="11" viewBox="0 0 10 11" preserveAspectRatio="none"><path d="M.6 .5 H6.5 L8.8 2.8 V10.1 L7.6 9.3 L6.3 10.1 H.6 Z" fill="#e6e6ec" stroke="#b9b9be" stroke-width="1"/>
<path d="M6.5 .5 V2.8 H8.8" fill="#d2d2d8" stroke="#b9b9be" stroke-width=".6"/>
<path d="M8.8 3.2 V10.1 L7.6 9.3 L6.3 10.1 H1.2" fill="none" stroke="#9a9aa0" stroke-width=".7" opacity=".75"/>
<g fill="#b4b4d8"><rect x="1.9" y="2.3" width="1.1" height="1.6"/><rect x="3.8" y="2.3" width="1.1" height="1.6"/>
<rect x="1.9" y="4.8" width="1.3" height="1.6"/><rect x="4" y="4.8" width="1.3" height="1.6"/><rect x="6.1" y="4.8" width="1.1" height="1.6"/>
<rect x="1.9" y="7.3" width="1.3" height="1.6"/><rect x="4" y="7.3" width="1.3" height="1.6"/><rect x="6.1" y="7.3" width="1.1" height="1.6"/></g></svg>
<svg class="a" style="left:197.9px;top:316.6px" width="10" height="11" viewBox="0 0 10 11" preserveAspectRatio="none"><path d="M.6 .5 H6.5 L8.8 2.8 V10.1 L7.6 9.3 L6.3 10.1 H.6 Z" fill="#4b9ae2" stroke="#2f88de" stroke-width="1"/>
<path d="M6.5 .5 V2.8 H8.8" fill="#86bdf0" stroke="#2f88de" stroke-width=".6"/>
<path d="M8.8 3.2 V10.1 L7.6 9.3 L6.3 10.1 H1.2" fill="none" stroke="#2a7ad0" stroke-width=".7" opacity=".75"/>
<g fill="#2b78cc"><rect x="1.9" y="2.3" width="1.1" height="1.6"/><rect x="3.8" y="2.3" width="1.1" height="1.6"/>
<rect x="1.9" y="4.8" width="1.3" height="1.6"/><rect x="4" y="4.8" width="1.3" height="1.6"/><rect x="6.1" y="4.8" width="1.1" height="1.6"/>
<rect x="1.9" y="7.3" width="1.3" height="1.6"/><rect x="4" y="7.3" width="1.3" height="1.6"/><rect x="6.1" y="7.3" width="1.1" height="1.6"/></g></svg>
<svg class="a" style="left:197.9px;top:330.6px" width="10" height="11" viewBox="0 0 10 11" preserveAspectRatio="none"><path d="M.6 .5 H6.5 L8.8 2.8 V10.1 L7.6 9.3 L6.3 10.1 H.6 Z" fill="#e6e6ec" stroke="#b9b9be" stroke-width="1"/>
<path d="M6.5 .5 V2.8 H8.8" fill="#d2d2d8" stroke="#b9b9be" stroke-width=".6"/>
<path d="M8.8 3.2 V10.1 L7.6 9.3 L6.3 10.1 H1.2" fill="none" stroke="#9a9aa0" stroke-width=".7" opacity=".75"/>
<g fill="#b4b4d8"><rect x="1.9" y="2.3" width="1.1" height="1.6"/><rect x="3.8" y="2.3" width="1.1" height="1.6"/>
<rect x="1.9" y="4.8" width="1.3" height="1.6"/><rect x="4" y="4.8" width="1.3" height="1.6"/><rect x="6.1" y="4.8" width="1.1" height="1.6"/>
<rect x="1.9" y="7.3" width="1.3" height="1.6"/><rect x="4" y="7.3" width="1.3" height="1.6"/><rect x="6.1" y="7.3" width="1.1" height="1.6"/></g></svg>
<svg class="a" style="left:197.9px;top:344.8px" width="10" height="11" viewBox="0 0 10 11" preserveAspectRatio="none"><path d="M.6 .5 H6.5 L8.8 2.8 V10.1 L7.6 9.3 L6.3 10.1 H.6 Z" fill="#e6e6ec" stroke="#b9b9be" stroke-width="1"/>
<path d="M6.5 .5 V2.8 H8.8" fill="#d2d2d8" stroke="#b9b9be" stroke-width=".6"/>
<path d="M8.8 3.2 V10.1 L7.6 9.3 L6.3 10.1 H1.2" fill="none" stroke="#9a9aa0" stroke-width=".7" opacity=".75"/>
<g fill="#b4b4d8"><rect x="1.9" y="2.3" width="1.1" height="1.6"/><rect x="3.8" y="2.3" width="1.1" height="1.6"/>
<rect x="1.9" y="4.8" width="1.3" height="1.6"/><rect x="4" y="4.8" width="1.3" height="1.6"/><rect x="6.1" y="4.8" width="1.1" height="1.6"/>
<rect x="1.9" y="7.3" width="1.3" height="1.6"/><rect x="4" y="7.3" width="1.3" height="1.6"/><rect x="6.1" y="7.3" width="1.1" height="1.6"/></g></svg>
<svg class="a" style="left:197.9px;top:358.8px" width="10" height="11" viewBox="0 0 10 11" preserveAspectRatio="none"><path d="M.6 .5 H6.5 L8.8 2.8 V10.1 L7.6 9.3 L6.3 10.1 H.6 Z" fill="#e6e6ec" stroke="#b9b9be" stroke-width="1"/>
<path d="M6.5 .5 V2.8 H8.8" fill="#d2d2d8" stroke="#b9b9be" stroke-width=".6"/>
<path d="M8.8 3.2 V10.1 L7.6 9.3 L6.3 10.1 H1.2" fill="none" stroke="#9a9aa0" stroke-width=".7" opacity=".75"/>
<g fill="#b4b4d8"><rect x="1.9" y="2.3" width="1.1" height="1.6"/><rect x="3.8" y="2.3" width="1.1" height="1.6"/>
<rect x="1.9" y="4.8" width="1.3" height="1.6"/><rect x="4" y="4.8" width="1.3" height="1.6"/><rect x="6.1" y="4.8" width="1.1" height="1.6"/>
<rect x="1.9" y="7.3" width="1.3" height="1.6"/><rect x="4" y="7.3" width="1.3" height="1.6"/><rect x="6.1" y="7.3" width="1.1" height="1.6"/></g></svg>
<svg class="a" style="left:197.9px;top:372.9px" width="10" height="11" viewBox="0 0 10 11" preserveAspectRatio="none"><path d="M.6 .5 H6.5 L8.8 2.8 V10.1 L7.6 9.3 L6.3 10.1 H.6 Z" fill="#e6e6ec" stroke="#b9b9be" stroke-width="1"/>
<path d="M6.5 .5 V2.8 H8.8" fill="#d2d2d8" stroke="#b9b9be" stroke-width=".6"/>
<path d="M8.8 3.2 V10.1 L7.6 9.3 L6.3 10.1 H1.2" fill="none" stroke="#9a9aa0" stroke-width=".7" opacity=".75"/>
<g fill="#b4b4d8"><rect x="1.9" y="2.3" width="1.1" height="1.6"/><rect x="3.8" y="2.3" width="1.1" height="1.6"/>
<rect x="1.9" y="4.8" width="1.3" height="1.6"/><rect x="4" y="4.8" width="1.3" height="1.6"/><rect x="6.1" y="4.8" width="1.1" height="1.6"/>
<rect x="1.9" y="7.3" width="1.3" height="1.6"/><rect x="4" y="7.3" width="1.3" height="1.6"/><rect x="6.1" y="7.3" width="1.1" height="1.6"/></g></svg>
<svg class="a" style="left:197.9px;top:387.0px" width="10" height="11" viewBox="0 0 10 11" preserveAspectRatio="none"><path d="M.6 .5 H6.5 L8.8 2.8 V10.1 L7.6 9.3 L6.3 10.1 H.6 Z" fill="#e6e6ec" stroke="#b9b9be" stroke-width="1"/>
<path d="M6.5 .5 V2.8 H8.8" fill="#d2d2d8" stroke="#b9b9be" stroke-width=".6"/>
<path d="M8.8 3.2 V10.1 L7.6 9.3 L6.3 10.1 H1.2" fill="none" stroke="#9a9aa0" stroke-width=".7" opacity=".75"/>
<g fill="#b4b4d8"><rect x="1.9" y="2.3" width="1.1" height="1.6"/><rect x="3.8" y="2.3" width="1.1" height="1.6"/>
<rect x="1.9" y="4.8" width="1.3" height="1.6"/><rect x="4" y="4.8" width="1.3" height="1.6"/><rect x="6.1" y="4.8" width="1.1" height="1.6"/>
<rect x="1.9" y="7.3" width="1.3" height="1.6"/><rect x="4" y="7.3" width="1.3" height="1.6"/><rect x="6.1" y="7.3" width="1.1" height="1.6"/></g></svg>
<svg class="a" style="left:197.9px;top:401.1px" width="10" height="11" viewBox="0 0 10 11" preserveAspectRatio="none"><path d="M.6 .5 H6.5 L8.8 2.8 V10.1 L7.6 9.3 L6.3 10.1 H.6 Z" fill="#e6e6ec" stroke="#b9b9be" stroke-width="1"/>
<path d="M6.5 .5 V2.8 H8.8" fill="#d2d2d8" stroke="#b9b9be" stroke-width=".6"/>
<path d="M8.8 3.2 V10.1 L7.6 9.3 L6.3 10.1 H1.2" fill="none" stroke="#9a9aa0" stroke-width=".7" opacity=".75"/>
<g fill="#b4b4d8"><rect x="1.9" y="2.3" width="1.1" height="1.6"/><rect x="3.8" y="2.3" width="1.1" height="1.6"/>
<rect x="1.9" y="4.8" width="1.3" height="1.6"/><rect x="4" y="4.8" width="1.3" height="1.6"/><rect x="6.1" y="4.8" width="1.1" height="1.6"/>
<rect x="1.9" y="7.3" width="1.3" height="1.6"/><rect x="4" y="7.3" width="1.3" height="1.6"/><rect x="6.1" y="7.3" width="1.1" height="1.6"/></g></svg>
<span class="t" style="left:210.0px;top:91.55px;transform:scaleX(0.9123)">Create symbolic links</span>
<span class="t" style="left:457.9px;top:91.55px;transform:scaleX(0.9399)">Administrators</span>
<span class="t" style="left:210.0px;top:105.55px;transform:scaleX(0.9175)">Debug programs</span>
<span class="t" style="left:457.9px;top:105.55px;transform:scaleX(0.9399)">Administrators</span>
<span class="t" style="left:210.0px;top:119.55px;transform:scaleX(0.9222)">Deny access to this computer from the network</span>
<span class="t" style="left:210.0px;top:133.55px;transform:scaleX(0.9083)">Deny log on as a batch job</span>
<span class="t" style="left:210.0px;top:147.55px;transform:scaleX(0.8841)">Deny log on as a service</span>
<span class="t" style="left:210.0px;top:161.55px;transform:scaleX(0.9283)">Deny log on locally</span>
<span class="t" style="left:210.0px;top:175.55px;transform:scaleX(0.9037)">Deny log on through Remote Desktop Services</span>
<span class="t" style="left:210.0px;top:189.55px;transform:scaleX(0.9077)">Enable computer and user accounts to be trusted for delega...</span>
<span class="t" style="left:210.0px;top:203.55px;transform:scaleX(0.9183)">Force shutdown from a remote system</span>
<span class="t" style="left:457.9px;top:203.55px;transform:scaleX(0.9399)">Administrators</span>
<span class="t" style="left:210.0px;top:218.55px;transform:scaleX(0.8970)">Generate security audits</span>
<span class="t" style="left:457.9px;top:218.55px;transform:scaleX(0.8282)">LOCAL SERVICE,NETWO...</span>
<span class="t" style="left:210.0px;top:232.55px;transform:scaleX(0.9203)">Impersonate a client after authentication</span>
<span class="t" style="left:457.9px;top:232.55px;transform:scaleX(0.8282)">LOCAL SERVICE,NETWO...</span>
<span class="t" style="left:210.0px;top:246.55px;transform:scaleX(0.8866)">Increase a process working set</span>
<span class="t" style="left:457.9px;top:246.55px;transform:scaleX(0.8296)">Users</span>
<span class="t" style="left:210.0px;top:260.55px;transform:scaleX(0.9140)">Increase scheduling priority</span>
<span class="t" style="left:457.9px;top:260.55px;transform:scaleX(0.9296)">Administrators,Window ...</span>
<span class="t" style="left:210.0px;top:274.55px;transform:scaleX(0.9038)">Load and unload device drivers</span>
<span class="t" style="left:457.9px;top:274.55px;transform:scaleX(0.9399)">Administrators</span>
<span class="t" style="left:210.0px;top:288.55px;transform:scaleX(0.9152)">Lock pages in memory</span>
<span class="t" style="left:210.0px;top:302.55px;transform:scaleX(0.9055)">Log on as a batch job</span>
<span class="t" style="left:457.9px;top:302.55px;transform:scaleX(0.9128)">Administrators,Backup ...</span>
<span class="t" style="left:210.0px;top:316.55px;transform:scaleX(0.8760)">Log on as a service</span>
<span class="t" style="left:457.9px;top:316.55px;transform:scaleX(0.8058)">NETWORK SERVICE,SQL...</span>
<span class="t" style="left:210.0px;top:330.55px;transform:scaleX(0.9241)">Manage auditing and security log</span>
<span class="t" style="left:457.9px;top:330.55px;transform:scaleX(0.9399)">Administrators</span>
<span class="t" style="left:210.0px;top:345.55px;transform:scaleX(0.9338)">Modify an object label</span>
<span class="t" style="left:210.0px;top:359.55px;transform:scaleX(0.9332)">Modify firmware environment values</span>
<span class="t" style="left:457.9px;top:359.55px;transform:scaleX(0.9399)">Administrators</span>
<span class="t" style="left:210.0px;top:373.55px;transform:scaleX(0.9179)">Obtain an impersonation token for another user in the same...</span>
<span class="t" style="left:457.9px;top:373.55px;transform:scaleX(0.9399)">Administrators</span>
<span class="t" style="left:210.0px;top:387.55px;transform:scaleX(0.9141)">Perform volume maintenance tasks</span>
<span class="t" style="left:457.9px;top:387.55px;transform:scaleX(0.9399)">Administrators</span>
<span class="t" style="left:210.0px;top:401.55px;transform:scaleX(0.9103)">Profile single process</span>
<span class="t" style="left:457.9px;top:401.55px;transform:scaleX(0.9399)">Administrators</span>
<span class="t" style="left:198.1px;top:74.55px;transform:scaleX(0.9170)">Policy</span>
<span class="t" style="left:457.8px;top:74.55px;transform:scaleX(0.8989)">Security Setting</span>
</div></div>
<!-- list vscroll -->
<div class="a" style="left:578px;top:70.8px;width:11.7px;height:337px;background:#f0f0f0"></div>
<div class="a" style="left:578px;top:188px;width:11.7px;height:152px;background:#cdcdcd"></div>
<svg class="a" style="left:578px;top:71px" width="12" height="339" viewBox="0 0 12 339">
 <path d="M2.5 9.2 L5.3 6.4 L8.1 9.2" fill="none" stroke="#3c3c3c" stroke-width="1.5"/>
 <path d="M2.5 330.3 L5.3 333.1 L8.1 330.3" fill="none" stroke="#3c3c3c" stroke-width="1.5"/>
</svg>

<!-- status bar -->
<div class="a" style="left:8.3px;top:410.7px;width:581.4px;height:15px;background:#f0f0f0"></div>
<div class="a" style="left:426px;top:411.5px;width:1px;height:14px;background:#dcdcdc"></div>
<div class="a" style="left:525px;top:411.5px;width:1px;height:14px;background:#dcdcdc"></div>
<div class="a" style="left:588px;top:411.5px;width:1px;height:14px;background:#e2e2e2"></div>
<div class="a" style="left:589.7px;top:60px;width:1.3px;height:367px;background:#fff"></div>
</body></html>
